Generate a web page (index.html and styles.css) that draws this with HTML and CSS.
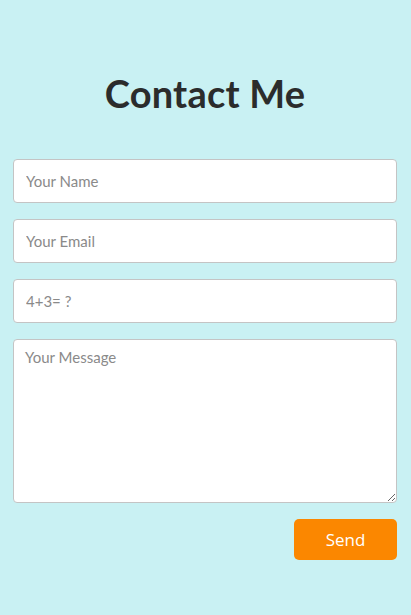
FILE: index.html
```html
<!DOCTYPE html>
<html>
<head>
<meta charset="utf-8">
<link rel="stylesheet" href="styles.css">
</head>
<body>
<main class="page">
  <h1 class="title">Contact Me</h1>
  <form class="form">
    <input class="field" type="text" placeholder="Your Name">
    <input class="field" type="email" placeholder="Your Email">
    <input class="field" type="text" placeholder="4+3= ?">
    <textarea class="field message" placeholder="Your Message"></textarea>
    <div class="actions">
      <button class="send" type="button">Send</button>
    </div>
  </form>
</main>
</body>
</html>
```

FILE: styles.css
```css
html, body {
  margin: 0;
  padding: 0;
  background: #c9f1f3;
}
body {
  font-family: "Lato", "Open Sans", sans-serif;
  min-height: 615px;
}
.page {
  padding: 0 14px 0 13px;
}
.title {
  margin: 0 0 43px;
  padding-top: 70px;
  text-align: center;
  font-size: 38px;
  font-weight: 700;
  color: #2b2c2c;
  line-height: 46px;
  letter-spacing: 0.2px;
}
.form {
  display: flex;
  flex-direction: column;
  gap: 16px;
}
.field {
  display: block;
  width: 100%;
  box-sizing: border-box;
  height: 44px;
  border: 1px solid #c4c4c4;
  border-radius: 4px;
  background: #fff;
  padding: 0 12px;
  font-family: "Lato", "Open Sans", sans-serif;
  font-size: 15px;
  color: #333;
  outline: none;
}
.field::placeholder {
  color: #8a8a8a;
}
.message {
  height: 164px;
  padding: 8px 11px;
  resize: vertical;
}
.actions {
  display: flex;
  justify-content: flex-end;
}
.send {
  width: 103px;
  height: 41px;
  border: none;
  border-radius: 5px;
  background: #fb8700;
  color: #fff;
  font-family: "Open Sans", "Lato", sans-serif;
  font-size: 17px;
  font-weight: 500;
  cursor: pointer;
}
```
